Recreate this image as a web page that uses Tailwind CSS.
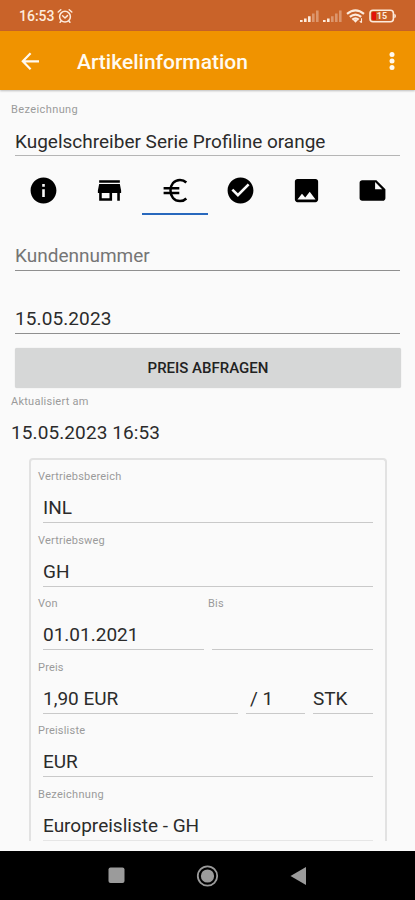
<!DOCTYPE html>
<html lang="de">
<head>
<meta charset="utf-8">
<meta name="viewport" content="width=device-width, initial-scale=1">
<title>Artikelinformation</title>
<script src="https://cdn.jsdelivr.net/npm/@tailwindcss/browser@4"></script>
</head>
<body class="bg-[#fafafa] font-['Roboto',sans-serif] text-[#2b2b2b]">
<div class="flex h-[900px] w-[415px] flex-col overflow-hidden whitespace-nowrap">
  <!-- Status bar -->
  <div class="flex h-[31px] shrink-0 items-center bg-[#c96329] pl-[19px] pr-[19px] text-[#fdebdc]">
    <span class="w-[38px] text-[14px] font-medium leading-[31px] pt-[1px]">16:53</span>
    <svg class="h-[16px] w-[16px]" viewBox="0 0 16 16" fill="none" stroke="currentColor" stroke-width="1.5" stroke-linecap="round" stroke-linejoin="round"><circle cx="8" cy="8.7" r="5.4"/><path d="M1.2 4 3.8 1.7M14.8 4 12.2 1.7M5.6 7.8 8 10l2.5-2.4M4.1 13l-1 1.3M11.9 13l1 1.3"/></svg>
    <div class="ml-auto flex items-center">
      <svg class="h-[14px] w-[19px]" viewBox="0 0 19 14" fill="currentColor"><path d="M0 11h2.6v2H0zM4 9.5h2.6V13H4zM8 7.3h2.6V13H8z"/><path opacity=".38" d="M12 4.5h2.6V13H12zM16 1.5h2.6V13H16z"/></svg>
      <svg class="ml-[4px] h-[14px] w-[19px]" viewBox="0 0 19 14" fill="currentColor"><path d="M0 11h2.6v2H0zM4 9.5h2.6V13H4z"/><path opacity=".38" d="M8 7.3h2.6V13H8zM12 4.5h2.6V13H12zM16 1.5h2.6V13H16z"/></svg>
      <svg class="ml-[4px] h-[14px] w-[19px]" viewBox="0 0 19 14" fill="none" stroke="currentColor" stroke-width="2.2"><path d="M1 4.8Q9.5-2.2 18 4.8M3.8 7.9q5.700-4.700 11.400 0M6.300 10.700q3.200-2.700 6.400 0"/><path d="m7.200 11.200 2.300 2.500 2.300-2.500-2.300-1z" fill="currentColor" stroke="none"/><path d="M15.500 9.300v4.500M13.800 12.200l1.700 1.500" stroke-width="1.100"/></svg>
      <svg class="ml-[4px] h-[14px] w-[27px]" viewBox="0 0 27 14"><rect x="1" y="1.200" width="23.400" height="11.600" rx="3" fill="none" stroke="currentColor" stroke-width="1.600"/><path d="M25.300 4.800q1.700.4 1.700 2.200t-1.700 2.200z" fill="currentColor"/><path d="M4 3h3v8H4q-1.200 0-1.200-1.200V4.200Q2.800 3 4 3z" fill="#e3120b"/><text x="13" y="10.300" text-anchor="middle" font-family="Roboto,sans-serif" font-size="9" font-weight="700" fill="currentColor">15</text></svg>
    </div>
  </div>
  <!-- App bar -->
  <header class="z-10 flex h-[59px] shrink-0 items-center bg-[#f09300] text-[#fffaf0] shadow-[0_1px_2px_rgba(0,0,0,0.25)]">
    <svg class="ml-[19px] h-[24px] w-[24px]" viewBox="0 0 24 24" fill="none" stroke="currentColor" stroke-width="2.200"><path d="M20 12.300H4M11.600 4.300 3.800 12.300l7.800 8"/></svg>
    <h1 class="ml-[34px] pt-[3px] text-[21px] font-medium leading-[28px]">Artikelinformation</h1>
    <svg class="ml-auto mr-[20px] h-[20px] w-[6px]" viewBox="0 0 6 20" fill="currentColor"><circle cx="3" cy="3.500" r="2.500"/><circle cx="3" cy="10" r="2.500"/><circle cx="3" cy="16.500" r="2.500"/></svg>
  </header>

  <main class="flex min-h-0 flex-1 flex-col pl-[11px] pr-[11px] pt-[12px]">
    <div class="h-[16px] shrink-0 text-[11px] leading-[16px] tracking-[0.4px] text-[#9a9a9a]">Bezeichnung</div>
    <div class="mx-[4px] flex h-[38px] shrink-0 items-end border-b border-[#b5b5b5] pb-[1px] text-[19px] leading-[24px]">Kugelschreiber Serie Profiline orange</div>

    <nav class="grid h-[59px] w-[394px] shrink-0 grid-cols-6 text-black">
      <div class="flex items-center justify-center pt-[9px]"><svg class="h-[31px] w-[31px]" viewBox="0 0 24 24" fill="currentColor"><path d="M12 2C6.480 2 2 6.480 2 12s4.480 10 10 10 10-4.480 10-10S17.520 2 12 2zm1 15h-2v-6h2v6zm0-8h-2V7h2v2z"/></svg></div>
      <div class="flex items-center justify-center pt-[9px]"><svg class="h-[31px] w-[31px]" viewBox="0 0 24 24" fill="currentColor"><path d="M20 4H4v2h16V4zm1 10v-2l-1-5H4l-1 5v2h1v6h10v-6h4v6h2v-6h1zm-9 4H6v-4h6v4z"/></svg></div>
      <div class="flex items-center justify-center border-b-2 border-[#2868bd] pt-[11px]"><svg class="h-[31px] w-[31px]" viewBox="0 0 31 31" fill="none" stroke="currentColor" stroke-width="2.500"><path d="M26.300 7.500C24.500 5.700 22.300 4.900 20 4.900c-6 0-9.500 4.700-9.500 10.600S14 26.100 20 26.100c2.300 0 4.500-.8 6.300-2.600M3.600 13.300h15.700M3.600 17.900h15.700"/></svg></div>
      <div class="flex items-center justify-center pt-[9px]"><svg class="h-[31px] w-[31px]" viewBox="0 0 24 24" fill="currentColor"><path d="M12 2C6.480 2 2 6.480 2 12s4.480 10 10 10 10-4.480 10-10S17.520 2 12 2zm-2 15l-5-5 1.410-1.410L10 14.170l7.590-7.590L19 8l-9 9z"/></svg></div>
      <div class="flex items-center justify-center pt-[9px]"><svg class="h-[31px] w-[31px]" viewBox="0 0 24 24" fill="currentColor"><path d="M21 19V5c0-1.100-.9-2-2-2H5c-1.100 0-2 .9-2 2v14c0 1.100.9 2 2 2h14c1.100 0 2-.9 2-2zM5 19l3.500-4.500 2.500 3.010L14.500 13l4.500 6z"/></svg></div>
      <div class="flex items-center justify-center pt-[9px]"><svg class="h-[31px] w-[31px]" viewBox="0 0 24 24" fill="currentColor"><path d="M15 4H4c-1.100 0-2 .9-2 2v12.010c0 1.100.9 1.990 2 1.990h16c1.100 0 2-.9 2-2v-7l-7-7zm-1 7V5.500l5.500 5.500H14z"/></svg></div>
    </nav>

    <div class="mx-[4px] flex h-[56px] shrink-0 items-end border-b border-[#8f8f8f] pb-[2px] text-[19px] leading-[24px] text-[#757575]">Kundennummer</div>
    <div class="mx-[4px] flex h-[63px] shrink-0 items-end border-b border-[#8f8f8f] pb-[2px] text-[19px] leading-[24px] tracking-[0.1px]">15.05.2023</div>
    <button class="mx-[4px] mt-[14px] h-[40px] w-[386px] shrink-0 rounded-[2px] bg-[#d6d7d7] text-[15px] font-medium text-[#222] shadow-[0_0_1px_rgba(0,0,0,0.2)]">PREIS ABFRAGEN</button>
    <div class="mt-[6px] h-[16px] shrink-0 text-[11px] leading-[16px] tracking-[0.25px] text-[#9a9a9a]">Aktualisiert am</div>
    <div class="mt-[11px] h-[24px] shrink-0 text-[19px] leading-[24px] tracking-[0.1px]">15.05.2023 16:53</div>

    <!-- Price card, cut off by the scroll area -->
    <section class="ml-[18px] mt-[13px] h-[383px] w-[358px] shrink-0 overflow-hidden rounded-t-[4px] border-x-2 border-t-2 border-[#e2e2e2] pl-[7px] pr-[12px] pt-[9px]">
      <div class="h-[63.500px]">
        <div class="h-[16px] text-[11px] leading-[16px] tracking-[0.2px] text-[#9a9a9a]">Vertriebsbereich</div>
        <div class="ml-[5px] flex h-[38px] items-end border-b border-[#c9c9c9] pb-[2px] text-[19px] leading-[24px]">INL</div>
      </div>
      <div class="h-[63.500px]">
        <div class="h-[16px] text-[11px] leading-[16px] tracking-[0.2px] text-[#9a9a9a]">Vertriebsweg</div>
        <div class="ml-[5px] flex h-[38px] items-end border-b border-[#c9c9c9] pb-[2px] text-[19px] leading-[24px]">GH</div>
      </div>
      <div class="flex h-[63.500px]">
        <div class="w-[170px]">
          <div class="h-[16px] text-[11px] leading-[16px] tracking-[0.2px] text-[#9a9a9a]">Von</div>
          <div class="ml-[5px] mr-[4px] flex h-[38px] items-end border-b border-[#c9c9c9] pb-[2px] text-[19px] leading-[24px]">01.01.2021</div>
        </div>
        <div class="flex-1">
          <div class="h-[16px] text-[11px] leading-[16px] tracking-[0.2px] text-[#9a9a9a]">Bis</div>
          <div class="ml-[4px] h-[38px] border-b border-[#c9c9c9]"></div>
        </div>
      </div>
      <div class="h-[63.500px]">
        <div class="h-[16px] text-[11px] leading-[16px] tracking-[0.2px] text-[#9a9a9a]">Preis</div>
        <div class="ml-[5px] flex gap-[8px] text-[19px] leading-[24px]">
          <div class="flex h-[38px] w-[195px] items-end border-b border-[#c9c9c9] pb-[2px]">1,90 EUR</div>
          <div class="flex h-[38px] w-[59px] items-end border-b border-[#c9c9c9] pb-[2px] pl-[4px]">/ 1</div>
          <div class="flex h-[38px] flex-1 items-end border-b border-[#c9c9c9] pb-[2px]">STK</div>
        </div>
      </div>
      <div class="h-[63.500px]">
        <div class="h-[16px] text-[11px] leading-[16px] tracking-[0.2px] text-[#9a9a9a]">Preisliste</div>
        <div class="ml-[5px] flex h-[38px] items-end border-b border-[#c9c9c9] pb-[2px] text-[19px] leading-[24px]">EUR</div>
      </div>
      <div class="h-[63.500px]">
        <div class="h-[16px] text-[11px] leading-[16px] tracking-[0.3px] text-[#9a9a9a]">Bezeichnung</div>
        <div class="ml-[5px] flex h-[38px] items-end border-b border-[#e6e6e6] pb-[2px] text-[19px] leading-[24px]">Europreisliste - GH</div>
      </div>
    </section>
  </main>

  <!-- System navigation -->
  <footer class="flex h-[49px] shrink-0 items-center bg-black text-[#9b9b9b]">
    <svg class="ml-[108px] h-[17px] w-[17px]" viewBox="0 0 17 17" fill="currentColor"><rect x=".5" y=".5" width="16" height="15.500" rx="2"/></svg>
    <svg class="ml-[71px] h-[24px] w-[24px]" viewBox="0 0 24 24"><circle cx="11.500" cy="12" r="9.700" fill="none" stroke="currentColor" stroke-width="1.800"/><circle cx="11.500" cy="12" r="6.600" fill="currentColor"/></svg>
    <svg class="ml-[70px] h-[18px] w-[17px]" viewBox="0 0 17 18" fill="currentColor"><path d="M.5 9 16 0v18z"/></svg>
  </footer>
</div>
</body>
</html>
